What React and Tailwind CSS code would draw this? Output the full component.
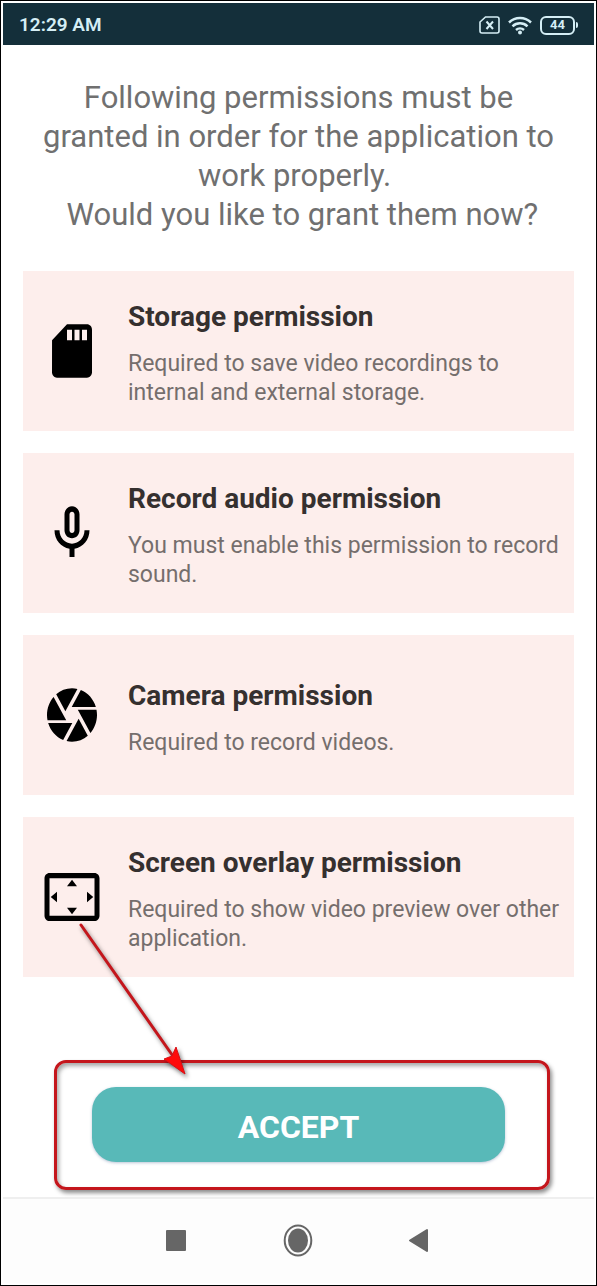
const permissions = [
    {
        title: "Storage permission",
        text: "Required to save video recordings to internal and external storage.",
        icon: "M18 2h-8L4.02 8 4 20c0 1.1.9 2 2 2h12c1.1 0 2-.9 2-2V4c0-1.1-.9-2-2-2zm-6 6h-2V4h2v4zm3 0h-2V4h2v4zm3 0h-2V4h2v4z",
    },
    {
        title: "Record audio permission",
        text: "You must enable this permission to record sound.",
        icon: "M12 14c1.66 0 3-1.34 3-3V5c0-1.66-1.34-3-3-3S9 3.34 9 5v6c0 1.66 1.34 3 3 3zm-1-9c0-.55.45-1 1-1s1 .45 1 1v6c0 .55-.45 1-1 1s-1-.45-1-1V5zm6 6c0 2.76-2.24 5-5 5s-5-2.24-5-5H5c0 3.53 2.61 6.43 6 6.92V21h2v-3.08c3.39-.49 6-3.39 6-6.92h-2z",
    },
    {
        title: "Camera permission",
        text: "Required to record videos.",
        icon: "M9.4 10.5l4.77-8.26C13.47 2.09 12.75 2 12 2c-2.4 0-4.6.85-6.32 2.25l3.66 6.35.06-.1zM21.54 9c-.92-2.92-3.15-5.26-6-6.34L11.88 9h9.66zm.26 1h-7.49l.29.5 4.76 8.25C20.97 16.96 22 14.61 22 12c0-.69-.07-1.35-.2-2zM8.54 12l-3.9-6.75C3.01 7.03 2 9.39 2 12c0 .69.07 1.35.2 2h7.49l-1.15-2zm-6.08 3c.92 2.92 3.15 5.26 6 6.34L12.12 15H2.46zm11.27 0l-3.9 6.76c.7.15 1.42.24 2.17.24 2.4 0 4.6-.85 6.32-2.25l-3.66-6.35-.93 1.6z",
    },
    {
        title: "Screen overlay permission",
        text: "Required to show video preview over other application.",
        icon: "M12.01 5.5L10 8h4l-1.99-2.5zM18 10v4l2.5-1.99L18 10zM6 10l-2.5 2.01L6 14v-4zm8 6h-4l2.01 2.5L14 16zm7-13H3c-1.1 0-2 .9-2 2v14c0 1.1.9 2 2 2h18c1.1 0 2-.9 2-2V5c0-1.1-.9-2-2-2zm0 16.01H3V4.99h18v14.02z",
    },
]

function StatusBar() {
    return (
        <header className="flex h-[42px] items-center justify-between bg-[#142f3a] px-4 pt-0.5 text-[#d5eef5]">
            <span className="text-[19px] font-semibold">12:29 AM</span>
            <div className="flex items-center gap-2">
                <svg className="h-[18px] w-[21px]" viewBox="0 0 21 18" fill="none" stroke="currentColor" strokeWidth="1.6">
                    <path d="M6.5 1H18a2 2 0 0 1 2 2v12a2 2 0 0 1-2 2H3a2 2 0 0 1-2-2V6z" />
                    <path d="M7.5 5.5l6.5 7.5M14 5.5L7.5 13" strokeWidth="2" />
                </svg>
                <svg className="h-[19px] w-6" viewBox="0 0 24 19" fill="none" stroke="currentColor" strokeWidth="2.5">
                    <path d="M1 6.5a16 16 0 0 1 22 0" />
                    <path d="M4.5 10.3a11 11 0 0 1 15 0" />
                    <path d="M8 14a6 6 0 0 1 8 0" />
                    <circle cx="12" cy="16.5" r="2" fill="currentColor" stroke="none" />
                </svg>
                <div className="flex items-center gap-px">
                    <span className="flex h-[19px] w-[35px] items-center justify-center rounded-md border-2 border-current text-[13px] font-bold">44</span>
                    <span className="h-1.5 w-0.5 rounded-r bg-current"></span>
                </div>
            </div>
        </header>
    )
}

function Permission({ title, text, icon }) {
    return (
        <li className="flex min-h-40 items-center gap-[26px] bg-[#fdeeec] pl-[19px] pr-2">
            <svg className="h-16 w-15 shrink-0" viewBox="0 0 24 24" preserveAspectRatio="none" fill="#000">
                <path d={icon} />
            </svg>
            <div className="pt-1">
                <h2 className="mb-3.5 text-[28px] leading-9 font-bold text-[#35302f]">{title}</h2>
                <p className="text-[23px] leading-[29px] text-[#756e6d]">{text}</p>
            </div>
        </li>
    )
}

function NavBar() {
    return (
        <nav className="flex h-[86px] items-center justify-center gap-[89px] border-t-2 border-[#efefef] bg-[#fdfdfd] pr-1">
            <button aria-label="Recent apps">
                <svg className="h-9 w-8" viewBox="0 0 32 36" fill="#666">
                    <rect x="6" y="7" width="20" height="21" rx="1" />
                </svg>
            </button>
            <button aria-label="Home">
                <svg className="h-9 w-8" viewBox="0 0 32 36" fill="#666">
                    <ellipse cx="17" cy="17.5" rx="13.3" ry="15" fill="none" stroke="#666" strokeWidth="2" />
                    <ellipse cx="17" cy="17.5" rx="10" ry="12" />
                </svg>
            </button>
            <button aria-label="Back">
                <svg className="h-9 w-8" viewBox="0 0 32 36" fill="#666" stroke="#666" strokeWidth="2" strokeLinejoin="round">
                    <path d="M8 17.5L25 7v21z" />
                </svg>
            </button>
        </nav>
    )
}

export default function App() {
    return (
        <div className="flex min-h-screen flex-col border border-black bg-white p-0.5 font-[Roboto,sans-serif]">
            <StatusBar />
            <main className="relative flex grow flex-col">
                <h1 className="pt-[33px] pb-[37px] text-center text-[31px] leading-[39px] text-[#707070]">
                    Following permissions must be<br />
                    granted in order for the application to<br />
                    work properly.&nbsp;<br />
                    &nbsp;Would you like to grant them now?
                </h1>
                <ul className="flex flex-col gap-[22px] px-5">
                    {permissions.map((item) => (
                        <Permission key={item.title} {...item} />
                    ))}
                </ul>
                <div className="mt-[83px] mr-11 mb-1.5 ml-[51px] rounded-xl border-[3px] border-[#c4161c] pt-6 pr-[42px] pb-[25px] pl-[35px] shadow-[2px_3px_4px_rgba(0,0,0,0.45),inset_2px_3px_4px_rgba(0,0,0,0.35)]">
                    <button className="h-[75px] w-full rounded-3xl bg-[#58b9b8] pt-1 text-[32px] font-bold text-white shadow-[0_1px_3px_rgba(60,90,140,0.35)]">ACCEPT</button>
                </div>
                {/* callout arrow pointing at the accept button */}
                <svg className="pointer-events-none absolute bottom-[118px] left-[70px] h-[160px] w-[125px] drop-shadow-[2px_3px_2px_rgba(0,0,0,0.5)]" viewBox="0 0 125 160">
                    <path d="M8 6L102 140" stroke="#c4161c" strokeWidth="3" strokeLinecap="round" />
                    <path d="M112 155L91 140l8-3 4-9z" fill="#ff0a0a" stroke="#d81016" strokeWidth="1" />
                </svg>
            </main>
            <NavBar />
        </div>
    )
}
